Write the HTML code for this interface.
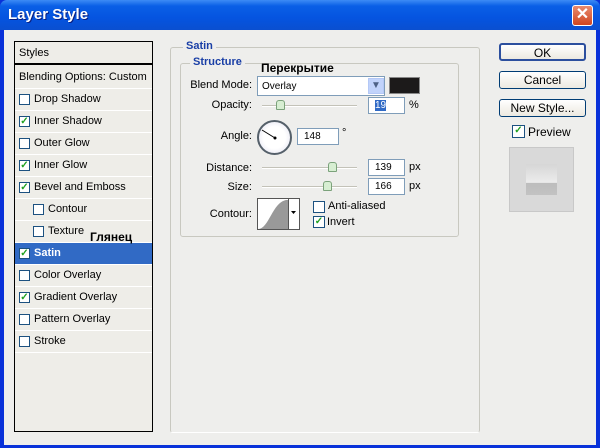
<!DOCTYPE html>
<html><head><style>
*{margin:0;padding:0;box-sizing:border-box}
body{width:600px;height:448px;position:relative;overflow:hidden;font-family:Tahoma,"Liberation Sans",sans-serif;font-size:11px;color:#000;background:#0831d9}
.a{position:absolute}
#title{left:0;top:0;width:600px;height:30px;background:linear-gradient(#3d8bf5,#0a5fe6 20%,#0554e0 60%,#0a4fd0);border-radius:7px 7px 0 0}
#title span{position:absolute;left:8px;top:6px;color:#fff;font-size:15px;font-weight:bold;text-shadow:1px 1px #0a1e80}
#close{left:572px;top:5px;width:21px;height:21px;background:linear-gradient(#e88a6e,#d0451f);border:1px solid #fff;border-radius:3px;color:#fff;font-size:16px;font-weight:bold;text-align:center;line-height:18px}
#body{left:4px;top:30px;width:592px;height:415px;background:#eeeeec}
.row{position:absolute;left:15px;width:137px;height:22px;border-bottom:1px solid #fff;background:#eeede8}
.cb{position:absolute;width:11px;height:11px;border:1px solid #1c5180;background:#fff;font-size:10px;color:#21a121;line-height:9px;text-align:center;font-weight:bold}
.row .cb{left:4px;top:5px}
.row span{position:absolute;left:19px;top:4px}
.btn{position:absolute;left:499px;width:87px;height:18px;border:1px solid #003c74;border-radius:3px;background:linear-gradient(#fff,#ece9e0);text-align:center;line-height:16px;font-size:12px}
.lbl{position:absolute;text-align:right;width:80px}
.fld{position:absolute;height:17px;border:1px solid #7f9db9;background:#fff;padding:2px 6px;font-size:10px}
.track{position:absolute;height:2px;background:#c3c2b8;border-bottom:1px solid #fff}
.thumb{position:absolute;width:9px;height:10px;background:#d7eed2;border:1px solid #7ba27b;border-radius:3px 3px 1px 1px}
</style></head><body>
<div id="title" class="a"><span>Layer Style</span></div>
<div id="close" class="a">✕</div>
<div id="body" class="a"></div>
<div class="a" style="left:14px;top:41px;width:139px;height:391px;border:1px solid #000;background:#eeede8"></div>
<div class="a" style="left:15px;top:42px;width:137px;height:23px;border-bottom:2px solid #000;padding:5px 4px">Styles</div>
<div class="a" style="left:15px;top:67px;width:137px;height:22px;border-bottom:1px solid #fff;padding:4px 4px">Blending Options: Custom</div>
<div class="row" style="top:89px"><div class="cb"></div><span>Drop Shadow</span></div>
<div class="row" style="top:111px"><div class="cb">✓</div><span>Inner Shadow</span></div>
<div class="row" style="top:133px"><div class="cb"></div><span>Outer Glow</span></div>
<div class="row" style="top:155px"><div class="cb">✓</div><span>Inner Glow</span></div>
<div class="row" style="top:177px"><div class="cb">✓</div><span>Bevel and Emboss</span></div>
<div class="row" style="top:199px"><div class="cb" style="left:18px"></div><span style="left:33px">Contour</span></div>
<div class="row" style="top:221px"><div class="cb" style="left:18px"></div><span style="left:33px">Texture</span></div>
<div class="row" style="top:243px;background:#316ac5;color:#fff;font-weight:bold"><div class="cb">✓</div><span>Satin</span></div>
<div class="row" style="top:265px"><div class="cb"></div><span>Color Overlay</span></div>
<div class="row" style="top:287px"><div class="cb">✓</div><span>Gradient Overlay</span></div>
<div class="row" style="top:309px"><div class="cb"></div><span>Pattern Overlay</span></div>
<div class="row" style="top:331px"><div class="cb"></div><span>Stroke</span></div>
<div class="a" style="left:90px;top:230px;font-weight:bold;font-size:12px;font-family:'Liberation Sans',sans-serif">Глянец</div>
<!-- groups -->
<div class="a" style="left:170px;top:47px;width:310px;height:386px;border:1px solid #c8c8c0;border-bottom-color:#fff;border-radius:3px"></div>
<div class="a" style="left:180px;top:63px;width:279px;height:174px;border:1px solid #c8c8c0;border-radius:3px"></div>
<div class="a" style="left:183px;top:40px;background:#eeeeec;padding:0 3px;color:#1a3fa6;font-weight:bold">Satin</div>
<div class="a" style="left:190px;top:56px;background:#eeeeec;padding:0 3px;color:#1a3fa6;font-weight:bold">Structure</div>
<div class="a" style="left:261px;top:61px;font-weight:bold;font-size:12px;font-family:'Liberation Sans',sans-serif">Перекрытие</div>
<div class="lbl" style="left:172px;top:79px">Blend Mode:</div>
<div class="fld" style="left:257px;top:76px;width:128px;height:20px;padding:4px 4px">Overlay</div>
<div class="a" style="left:368px;top:78px;width:16px;height:16px;background:#c1d3fb;border:1px solid #b4c8f6;color:#4d6185;text-align:center;font-size:10px;line-height:14px">▼</div>
<div class="a" style="left:389px;top:77px;width:31px;height:17px;background:#1c1a1a;border:1px solid #888"></div>
<div class="lbl" style="left:172px;top:99px">Opacity:</div>
<div class="track" style="left:262px;top:105px;width:95px"></div>
<div class="thumb" style="left:276px;top:100px"></div>
<div class="fld" style="left:368px;top:97px;width:37px"><span style="background:#316ac5;color:#fff">19</span></div>
<div class="a" style="left:409px;top:99px">%</div>
<div class="lbl" style="left:172px;top:130px">Angle:</div>
<div class="a" style="left:257px;top:120px;width:35px;height:35px;border:2px solid #55606a;border-radius:50%;background:radial-gradient(#fff 50%,#dde)"></div>
<svg class="a" style="left:257px;top:120px" width="35" height="35"><line x1="5" y1="10" x2="18" y2="18" stroke="#000"/><circle cx="18" cy="18" r="1.5"/></svg>
<div class="fld" style="left:297px;top:128px;width:42px">148</div>
<div class="a" style="left:342px;top:127px">°</div>
<div class="lbl" style="left:172px;top:162px">Distance:</div>
<div class="track" style="left:262px;top:167px;width:95px"></div>
<div class="thumb" style="left:328px;top:162px"></div>
<div class="fld" style="left:368px;top:159px;width:37px">139</div>
<div class="a" style="left:409px;top:161px">px</div>
<div class="lbl" style="left:172px;top:181px">Size:</div>
<div class="track" style="left:262px;top:186px;width:95px"></div>
<div class="thumb" style="left:323px;top:181px"></div>
<div class="fld" style="left:368px;top:178px;width:37px">166</div>
<div class="a" style="left:409px;top:180px">px</div>
<div class="lbl" style="left:172px;top:208px">Contour:</div>
<svg class="a" style="left:257px;top:198px" width="43" height="32"><rect x="0.5" y="0.5" width="42" height="31" fill="#fff" stroke="#555"/><path d="M1 31 C12 31 15 5 29 2 L31 2 L31 31 Z" fill="#999"/><line x1="31.5" y1="1" x2="31.5" y2="31" stroke="#555"/><path d="M34 13 h5 l-2.5 3z" fill="#000"/></svg>
<div class="cb a" style="left:313px;top:201px;width:12px;height:12px"></div>
<div class="a" style="left:328px;top:200px">Anti-aliased</div>
<div class="cb a" style="left:313px;top:216px;width:12px;height:12px">✓</div>
<div class="a" style="left:327px;top:216px">Invert</div>
<div class="btn" style="top:43px;border-width:2px;border-color:#2c4f9e">OK</div>
<div class="btn" style="top:71px">Cancel</div>
<div class="btn" style="top:99px">New Style...</div>
<div class="cb a" style="left:512px;top:125px;width:13px;height:13px">✓</div>
<div class="a" style="left:528px;top:125px;font-size:12px">Preview</div>
<div class="a" style="left:509px;top:147px;width:65px;height:65px;background:#d9d9d9;border:1px solid #c8c8c8"></div>
<div class="a" style="left:526px;top:164px;width:31px;height:31px;background:linear-gradient(#d6d6d6,#ececec 60%,#bdbdbd 62%,#c2c2c2)"></div>
</body></html>
